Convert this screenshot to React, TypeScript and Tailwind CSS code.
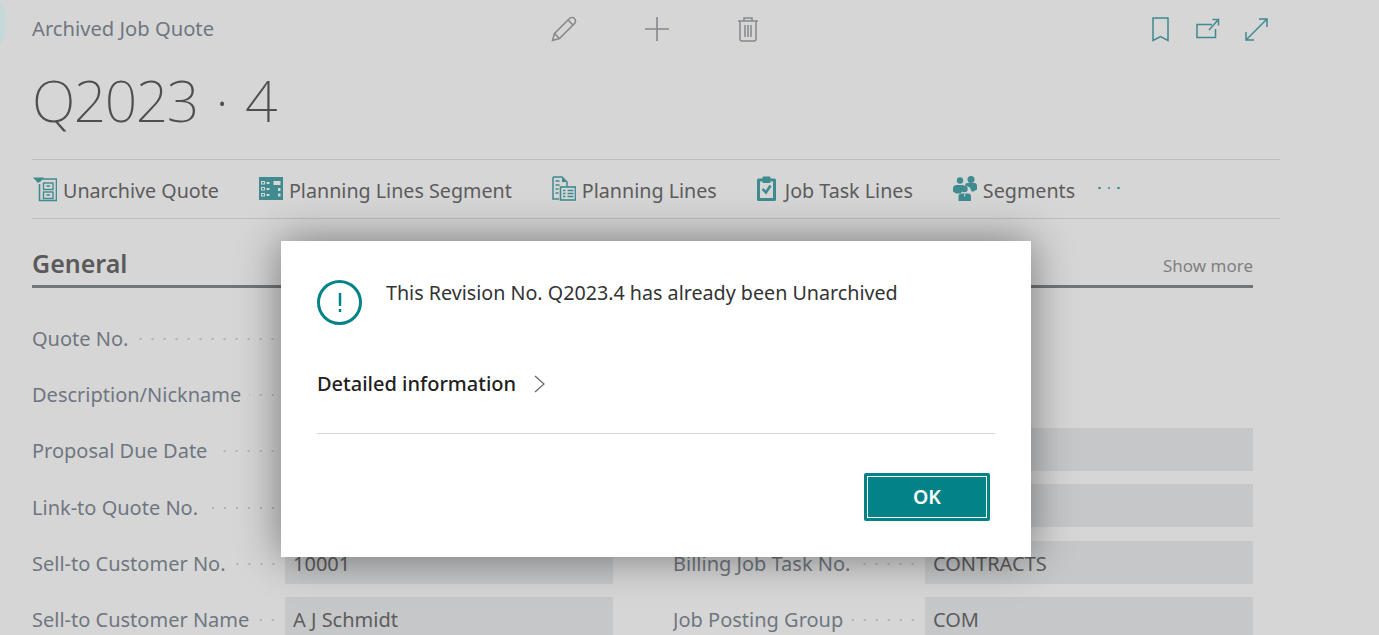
const font = { fontFamily: '"Noto Sans", sans-serif' };

const leftRows = [
  { label: 'Quote No.', value: '' },
  { label: 'Description/Nickname', value: '' },
  { label: 'Proposal Due Date', value: '' },
  { label: 'Link-to Quote No.', value: '' },
  { label: 'Sell-to Customer No.', value: '10001' },
  { label: 'Sell-to Customer Name', value: 'A J Schmidt' },
];

const rightRows = [
  { label: '', value: '', field: false },
  { label: '', value: '', field: false },
  { label: '', value: '', field: true },
  { label: '', value: '', field: true },
  { label: 'Billing Job Task No.', value: 'CONTRACTS', field: true },
  { label: 'Job Posting Group', value: 'COM', field: true },
];

function ArchiveIcon() {
  return (
    <svg width="24" height="26" viewBox="0 0 24 26" className="text-[#3f8b90]">
      <path d="M0 1.500h11l-3.500 4-2.500 1.500z" fill="currentColor" />
      <path d="M9 3h14.500v21.500H6.500V8" fill="none" stroke="currentColor" strokeWidth="1.600" />
      <rect x="10.500" y="7" width="9.500" height="6.500" fill="none" stroke="currentColor" strokeWidth="1.400" />
      <rect x="10.500" y="16" width="9.500" height="6.500" fill="none" stroke="currentColor" strokeWidth="1.400" />
      <path d="M13.500 10h3.500M13.500 19h3.500" stroke="currentColor" strokeWidth="1.400" />
    </svg>
  );
}

function GridIcon() {
  return (
    <svg width="24" height="24" viewBox="0 0 24 24" className="text-[#3f8b90]">
      <rect width="24" height="23" fill="currentColor" />
      <g fill="none" stroke="#d6d6d6" strokeWidth="1">
        <rect x="2.500" y="4.500" width="3" height="2.500" />
        <rect x="2.500" y="10.500" width="3" height="2.500" />
        <rect x="2.500" y="16.500" width="3" height="2.500" />
      </g>
      <g fill="#d6d6d6">
        <rect x="7.500" y="5" width="3" height="2" />
        <rect x="7.500" y="11" width="3" height="2" />
        <rect x="7.500" y="17" width="3" height="2" />
        <rect x="14.500" y="4" width="7" height="4" />
        <rect x="19" y="11" width="2.500" height="3" />
        <rect x="19" y="16.500" width="2.500" height="3" />
      </g>
    </svg>
  );
}

function DocListIcon() {
  return (
    <svg width="24" height="26" viewBox="0 0 24 26" className="text-[#3f8b90]">
      <path d="M1 1h9l5 5v4M1 1v22h6" fill="none" stroke="currentColor" strokeWidth="1.500" />
      <path d="M10 1v5h5" fill="currentColor" />
      <path d="M3.500 5h4M3.500 9h4M3.500 13h3M3.500 17h3" stroke="currentColor" strokeWidth="1.400" />
      <rect x="8.500" y="11" width="15" height="13" fill="none" stroke="currentColor" strokeWidth="1.600" />
      <path d="M11 14.500h2.500M11 17.500h2.500M11 20.500h2.500M15.500 14.500h6M15.500 17.500h6M15.500 20.500h6" stroke="currentColor" strokeWidth="1.400" />
    </svg>
  );
}

function ClipboardIcon() {
  return (
    <svg width="22" height="25" viewBox="0 0 22 25" className="text-[#3f8b90]">
      <rect y="2.500" width="19" height="22.500" rx="1.500" fill="currentColor" />
      <rect x="3" y="5.500" width="13" height="16.500" fill="#d6d6d6" />
      <rect x="5.500" y="0.500" width="8" height="6.500" rx="1" fill="currentColor" />
      <path d="M5.500 13l3.500 3.500 4.500-7" fill="none" stroke="currentColor" strokeWidth="2.600" />
    </svg>
  );
}

function PeopleIcon() {
  return (
    <svg width="24" height="25" viewBox="0 0 24 25" className="text-[#3f8b90]">
      <g fill="currentColor">
        <circle cx="7" cy="4.500" r="3.200" />
        <circle cx="18" cy="3.500" r="3.500" />
        <path d="M0 12.500a3.500 3.500 0 0 1 3.500-3.500h6a3 3 0 0 1 3 2.500l-5 6H3l-3-2z" />
        <path d="M12 9.500a2.500 2.500 0 0 1 2.500-2.500h7a2.500 2.500 0 0 1 2.500 2.500v4l-3.500 2h-2l-1.500-4z" />
        <circle cx="11.500" cy="13" r="3.200" />
        <path d="M5.500 20.500a3 3 0 0 1 3-3h6.500a3 3 0 0 1 3 3V25h-12.500z" />
      </g>
      <path d="M11.700 17.500v3" stroke="#d6d6d6" strokeWidth="1" />
    </svg>
  );
}

function ToolbarItem({ icon, label }: { icon: React.ReactNode; label: string }) {
  return (
    <div className="flex items-center gap-[6px]">
      {icon}
      <span className="pt-[4px] text-[19.700px] text-[#5c5c5c]">{label}</span>
    </div>
  );
}

function Row({ label, value, field, w }: { label: string; value: string; field: boolean; w: string }) {
  return (
    <div className="flex h-[43px] items-center">
      <div className={`flex ${w} h-full shrink-0 items-center gap-2 overflow-hidden pr-[6px] pt-[4px]`}>
        <span className="whitespace-nowrap text-[20px] text-[#6f7680]">{label}</span>
        {label && (
          <span className="h-[4px] min-w-0 flex-1 bg-[radial-gradient(circle,#b2b2b2_1px,transparent_1.400px)] bg-[length:12px_4px] bg-right bg-repeat-x" />
        )}
      </div>
      {field && (
        <div className="flex h-[43px] w-[328px] items-center bg-[#c6c7c9] px-2 pt-[4px] text-[20px] text-[#5c5c5c]">{value}</div>
      )}
    </div>
  );
}

export default function App() {
  return (
    <div className="relative h-[635px] w-[1379px] overflow-hidden bg-[#d6d6d6]" style={font}>
      <div className="absolute -left-[73px] -top-[17px] h-[80px] w-[80px] rounded-full bg-[#c6d9d9]" />

      <div className="w-[1280px] pl-8">
        {/* Header */}
        <div className="flex h-[58px] items-center pr-[12px]">
          <div className="w-[519px] pb-[2px] text-[20.200px] text-[#6f7680]">Archived Job Quote</div>
          <div className="flex flex-1 items-center gap-[67px] text-[#85888c]">
            <svg width="26" height="26" viewBox="0 0 26 26" fill="none" stroke="currentColor" strokeWidth="1.500">
              <path d="M1.500 24.500l2-7L18.500 2.500a2.500 2.500 0 0 1 5 5L8.500 22.500z" />
              <path d="M3.500 17.500l5 5M17 4l5 5" />
            </svg>
            <svg width="26" height="26" viewBox="0 0 26 26" stroke="currentColor" strokeWidth="1.600">
              <path d="M13 1v24M1 13h24" />
            </svg>
            <svg width="22" height="26" viewBox="0 0 22 26" fill="none" stroke="currentColor" strokeWidth="1.500">
              <path d="M1 5h20M7 5V2h8v3M3 5v18a2 2 0 0 0 2 2h12a2 2 0 0 0 2-2V5M8 9v12M11 9v12M14 9v12" />
            </svg>
          </div>
          <div className="flex items-center text-[#3f8b90]">
            <svg width="17" height="25" viewBox="0 0 17 25" fill="none" stroke="currentColor" strokeWidth="1.500" className="mr-[27px]">
              <path d="M1 1h15v22.500l-7.500-4-7.500 4z" />
            </svg>
            <svg width="24" height="22" viewBox="0 0 24 22" fill="none" stroke="currentColor" strokeWidth="1.500" className="mr-[25px]">
              <path d="M16 6.500H1v13h18.500V11M13 12l9-10M16.500 1.500h6v6" />
            </svg>
            <svg width="23" height="23" viewBox="0 0 23 23" fill="none" stroke="currentColor" strokeWidth="1.500">
              <path d="M1 22L22 1M14 1h8v8M1 14v8h8" />
            </svg>
          </div>
        </div>

        <div className="flex h-[101px] items-start text-[57px] font-extralight leading-[84px] tracking-[-1.500px] text-[#4f4f4f] [word-spacing:4.500px]">Q2023 · 4</div>

        {/* Action bar */}
        <div className="flex h-[60px] items-center gap-[40px] border-y border-[#bebebe] pl-[1px]">
          <ToolbarItem icon={<ArchiveIcon />} label="Unarchive Quote" />
          <ToolbarItem icon={<GridIcon />} label="Planning Lines Segment" />
          <ToolbarItem icon={<DocListIcon />} label="Planning Lines" />
          <ToolbarItem icon={<ClipboardIcon />} label="Job Task Lines" />
          <div className="flex items-center gap-[23px]">
            <ToolbarItem icon={<PeopleIcon />} label="Segments" />
            <div className="flex gap-[7px] pb-[2px]">
              <span className="h-[2.500px] w-[2.500px] rounded-full bg-[#3f8b90]" />
              <span className="h-[2.500px] w-[2.500px] rounded-full bg-[#3f8b90]" />
              <span className="h-[2.500px] w-[2.500px] rounded-full bg-[#3f8b90]" />
            </div>
          </div>
        </div>

        {/* General */}
        <div className="w-[1221px]">
          <div className="flex h-[69px] items-end justify-between border-b-[3px] border-[#72757c] pb-[3px]">
            <span className="text-[25px] font-semibold text-[#5a5a5a]">General</span>
            <span className="pb-[4px] text-[17px] text-[#808080]">Show more</span>
          </div>
          <div className="flex gap-[60px] pt-[27px]">
            <div className="flex flex-col gap-[13.400px]">
              {leftRows.map((r) => (
                <Row key={r.label} label={r.label} value={r.value} field w="w-[253px]" />
              ))}
            </div>
            <div className="flex flex-col gap-[13.400px]">
              {rightRows.map((r, i) => (
                <Row key={i} label={r.label} value={r.value} field={r.field} w="w-[252px]" />
              ))}
            </div>
          </div>
        </div>
      </div>

      {/* Dialog */}
      <div className="absolute left-[281px] top-[241px] flex h-[316px] w-[750px] flex-col bg-white px-[36px] shadow-[0_0_40px_rgba(0,0,0,0.45)]">
        <div className="flex items-start gap-[24px] pt-[39px]">
          <div className="flex h-[45px] w-[45px] items-center justify-center rounded-full border-[3px] border-[#038387] text-[#038387]">
            <svg width="4" height="20" viewBox="0 0 4 20" fill="currentColor">
              <rect x="0.750" y="0" width="2.500" height="13" />
              <rect x="0.750" y="16" width="2.500" height="3" />
            </svg>
          </div>
          <div className="text-[19.700px] leading-[26px] text-[#333333]">This Revision No. Q2023.4 has already been Unarchived</div>
        </div>
        <div className="mt-[46px] flex h-[26px] items-center gap-[18px] text-[#212121]">
          <span className="text-[20px] font-medium">Detailed information</span>
          <svg width="11" height="18" viewBox="0 0 11 18" fill="none" stroke="#666666" strokeWidth="1.200">
            <path d="M1 1l9 8-9 8" />
          </svg>
        </div>
        <div className="mt-[36px] border-b border-[#d4d4d4]" />
        <div className="mt-[39px] flex justify-end pr-[5px]">
          <button className="flex h-[48px] w-[126px] items-center justify-center rounded-[2px] bg-[#038387] text-[19.500px] font-semibold text-white outline outline-1 -outline-offset-4 outline-white">
            OK
          </button>
        </div>
      </div>
    </div>
  );
}
